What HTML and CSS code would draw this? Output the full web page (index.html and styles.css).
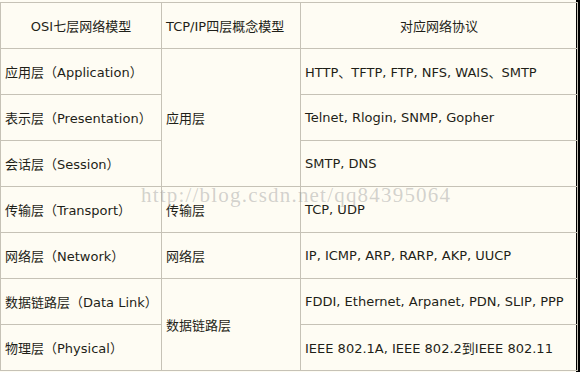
FILE: index.html
```html
<!DOCTYPE html>
<html>
<head>
<meta charset="utf-8">
<link rel="stylesheet" href="styles.css">
</head>
<body>
<div class="page">
  <div class="wrap">
    <table class="osi">
      <colgroup>
        <col class="c1"><col class="c2"><col class="c3">
      </colgroup>
      <tr class="head">
        <td class="center">OSI七层网络模型</td>
        <td>TCP/IP四层概念模型</td>
        <td class="center">对应网络协议</td>
      </tr>
      <tr>
        <td>应用层（Application）</td>
        <td rowspan="3">应用层</td>
        <td>HTTP、TFTP, FTP, NFS, WAIS、SMTP</td>
      </tr>
      <tr>
        <td>表示层（Presentation）</td>
        <td>Telnet, Rlogin, SNMP, Gopher</td>
      </tr>
      <tr>
        <td>会话层（Session）</td>
        <td>SMTP, DNS</td>
      </tr>
      <tr>
        <td>传输层（Transport）</td>
        <td>传输层</td>
        <td>TCP, UDP</td>
      </tr>
      <tr>
        <td>网络层（Network）</td>
        <td>网络层</td>
        <td>IP, ICMP, ARP, RARP, AKP, UUCP</td>
      </tr>
      <tr>
        <td>数据链路层（Data Link）</td>
        <td rowspan="2">数据链路层</td>
        <td>FDDI, Ethernet, Arpanet, PDN, SLIP, PPP</td>
      </tr>
      <tr>
        <td>物理层（Physical）</td>
        <td>IEEE 802.1A, IEEE 802.2到IEEE 802.11</td>
      </tr>
    </table>
    <div class="watermark">http://blog.csdn.net/qq84395064</div>
  </div>
  <div class="edge"></div>
</div>
</body>
</html>
```

FILE: styles.css
```css
html, body {
  margin: 0;
  padding: 0;
  background: #fefcf3;
}
.page {
  display: flex;
  width: 580px;
  height: 372px;
  overflow: hidden;
}
.wrap {
  position: relative;
  width: 576px;
  padding-top: 2px;
}
.edge {
  width: 4px;
  background: #000;
}
.osi {
  border-collapse: collapse;
  table-layout: fixed;
  width: 577px;
  font-family: "DejaVu Sans", "Noto Sans CJK SC", sans-serif;
  font-size: 13px;
  color: #1f1f18;
}
.c1 { width: 161px; }
.c2 { width: 139px; }
.c3 { width: 277px; }
.osi td {
  border: 1px solid #c6c2b6;
  height: 45px;
  padding: 0 0 0 4px;
  vertical-align: middle;
  white-space: nowrap;
  overflow: hidden;
}
.osi td.center {
  text-align: center;
  padding: 0;
}
.watermark {
  position: absolute;
  left: 141px;
  top: 183px;
  font-family: "Liberation Serif", serif;
  font-size: 21px;
  letter-spacing: 1.2px;
  color: rgba(150, 150, 150, 0.42);
  pointer-events: none;
}
```
